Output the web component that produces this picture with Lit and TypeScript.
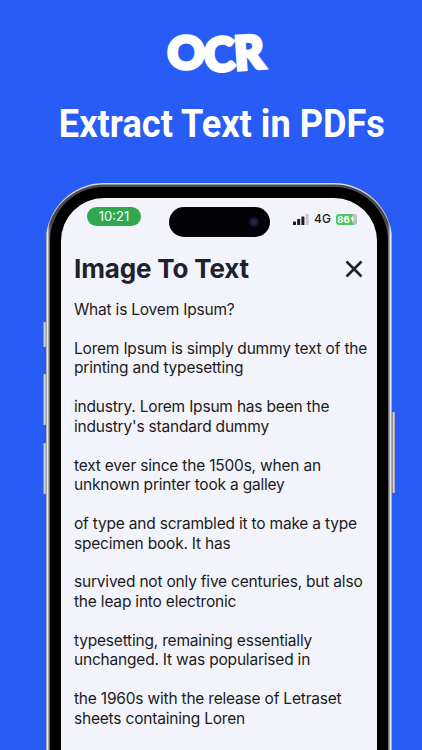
import { LitElement, html, css } from "lit";
import { customElement } from "lit/decorators.js";

const PARAS = [
  ["What is Lovem Ipsum?"],
  ["Lorem Ipsum is simply dummy text of the", "printing and typesetting"],
  ["industry. Lorem Ipsum has been the", "industry's standard dummy"],
  ["text ever since the 1500s, when an", "unknown printer took a galley"],
  ["of type and scrambled it to make a type", "specimen book. It has"],
  ["survived not only five centuries, but also", "the leap into electronic"],
  ["typesetting, remaining essentially", "unchanged. It was popularised in"],
  ["the 1960s with the release of Letraset", "sheets containing Loren"],
];

@customElement("app-root")
export class AppRoot extends LitElement {
  static styles = css`
    :host {
      display: block;
      width: 422px;
      height: 750px;
      overflow: hidden;
      background: #285cf6;
      font-family: Inter, "Liberation Sans", sans-serif;
    }
    .head {
      height: 183px;
      display: flex;
      flex-direction: column;
      align-items: center;
      color: #fff;
    }
    .logo {
      margin-top: 24px;
      margin-left: 9px;
      height: 56px;
      display: flex;
      align-items: center;
      font-family: Lato, "Liberation Sans", sans-serif;
      font-weight: 900;
      font-size: 46px;
      line-height: 56px;
      letter-spacing: -0.5px;
      -webkit-text-stroke: 3.6px #fff;
    }
    .logo span { display: block; }
    .logo .c { transform: rotate(-3deg) translateY(2px); }
    .logo .r { transform: rotate(-4deg); }
    .tagline {
      margin-top: 21px;
      margin-left: 21px;
      font-family: Roboto, "Liberation Sans", sans-serif;
      font-weight: 700;
      font-size: 39px;
      line-height: 46px;
      white-space: nowrap;
      transform: scaleX(0.927);
    }
    .phone {
      position: relative;
      box-sizing: border-box;
      width: 346px;
      height: 640px;
      margin-left: 46px;
      padding: 4px 4px 0;
      border-radius: 58px 58px 0 0;
      background: linear-gradient(90deg, #8d9096 0, #e6e7ea 1.5px, #85888d 3px, #4a4b4f 4px, #4a4b4f 342px, #85888d 343px, #e6e7ea 344.5px, #8d9096 346px);
      box-shadow: inset 0 1.5px 0 #d8d9dc;
    }
    .bezel {
      box-sizing: border-box;
      height: 100%;
      padding: 11px 11px 0;
      border-radius: 54px 54px 0 0;
      background: #000;
    }
    .screen {
      position: relative;
      height: 100%;
      box-sizing: border-box;
      padding: 0 13px;
      border-radius: 43px 43px 0 0;
      background: #f3f4fb;
      color: #1c1c26;
    }
    .btn {
      position: absolute;
      width: 3px;
      background: linear-gradient(90deg, #73767b, #e0e1e4 60%, #8b8e93);
      border-radius: 1px;
    }
    .b1 { left: -3px; top: 139px; height: 25px; }
    .b2 { left: -3px; top: 191px; height: 51px; }
    .b3 { left: -3px; top: 260px; height: 51px; }
    .b4 { right: -3px; top: 229px; height: 81px; }
    .status {
      height: 39px;
      position: relative;
    }
    .time {
      position: absolute;
      left: 13px;
      top: 9px;
      width: 54px;
      height: 19px;
      border-radius: 10px;
      background: #30a850;
      color: #fff;
      font-size: 13px;
      line-height: 19px;
      text-align: center;
    }
    .island {
      position: absolute;
      left: 95px;
      top: 9px;
      width: 101px;
      height: 30px;
      border-radius: 15px;
      background: #020207;
    }
    .island i {
      position: absolute;
      right: 11px;
      top: 10px;
      width: 10px;
      height: 10px;
      border-radius: 50%;
      background: radial-gradient(circle, #23254f 20%, #0c0d20 70%);
    }
    .right {
      position: absolute;
      left: 219px;
      top: 14px;
      display: flex;
      align-items: center;
      height: 14px;
      color: #1a1a1f;
    }
    .net { font-size: 12px; margin-left: 5px; line-height: 14px; font-weight: 500; }
    .bat {
      display: flex;
      align-items: center;
      margin-left: 5px;
      width: 21px;
      height: 11px;
      box-sizing: border-box;
      border-radius: 3px;
      background: linear-gradient(90deg, #4fc765 0 82%, #b9bcb9 82%);
      color: #fff;
      font-size: 9.5px;
      font-weight: 700;
      line-height: 11px;
      padding-left: 1.5px;
    }
    .title-row {
      display: flex;
      align-items: center;
      justify-content: space-between;
      height: 33px;
      margin-top: 15px;
    }
    h1 {
      margin: 0;
      font-size: 26px;
      line-height: 33px;
      font-weight: 700;
      letter-spacing: -0.15px;
      color: #20212d;
    }
    .close { margin-right: 1px; display: block; }
    .body { margin-top: 15px; }
    p {
      margin: 0 0 19.4px;
      font-size: 15.5px;
      line-height: 19.5px;
      letter-spacing: -0.2px;
      white-space: nowrap;
      color: #1b1b20;
    }
  `;

  render() {
    return html`
      <div class="head">
        <div class="logo"><span>O</span><span class="c">C</span><span class="r">R</span></div>
        <div class="tagline">Extract Text in PDFs</div>
      </div>
      <div class="phone">
        <div class="btn b1"></div>
        <div class="btn b2"></div>
        <div class="btn b3"></div>
        <div class="btn b4"></div>
        <div class="bezel">
          <div class="screen">
            <div class="status">
              <div class="time">10:21</div>
              <div class="island"><i></i></div>
              <div class="right">
                <svg width="16" height="11" viewBox="0 0 16 11">
                  <rect x="0" y="7.5" width="3" height="3.5" rx=".6" fill="#1a1a1f"/>
                  <rect x="4.2" y="5" width="3" height="6" rx=".6" fill="#1a1a1f"/>
                  <rect x="8.4" y="2.5" width="3" height="8.5" rx=".6" fill="#1a1a1f"/>
                  <rect x="12.6" y="0" width="3" height="11" rx=".6" fill="#c6c7cc"/>
                </svg>
                <span class="net">4G</span>
                <div class="bat">
                  <span>86</span>
                  <svg width="5" height="8" viewBox="0 0 5 8"><path d="M3 0 L0.4 4.4 H2.2 L1.8 8 L4.6 3.4 H2.8 Z" fill="#fff"/></svg>
                </div>
              </div>
            </div>
            <div class="title-row">
              <h1>Image To Text</h1>
              <svg class="close" width="18" height="18" viewBox="0 0 18 18">
                <path d="M1.5 1.5 L16.5 16.5 M16.5 1.5 L1.5 16.5" stroke="#20212d" stroke-width="2.6" fill="none"/>
              </svg>
            </div>
            <div class="body">
              ${PARAS.map((lines) => html`<p>${lines.map((l, i) => html`${i ? html`<br />` : ""}${l}`)}</p>`)}
            </div>
          </div>
        </div>
      </div>
    `;
  }
}
